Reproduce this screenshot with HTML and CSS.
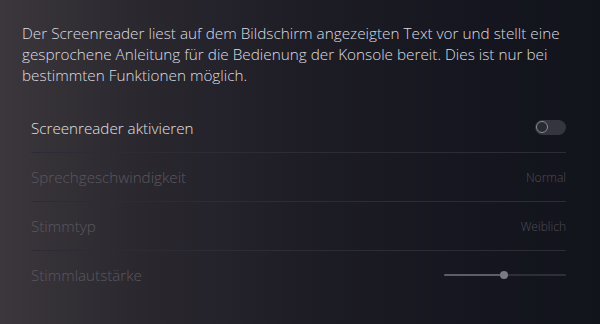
FILE: index.html
```html
<!DOCTYPE html>
<html lang="de">
<head>
<meta charset="utf-8">
<link rel="stylesheet" href="styles.css">
</head>
<body>
<main class="page">
  <p class="intro">Der Screenreader liest auf dem Bildschirm angezeigten Text vor und stellt eine gesprochene Anleitung für die Bedienung der Konsole bereit. Dies ist nur bei bestimmten Funktionen möglich.</p>
  <ul class="settings">
    <li class="row">
      <span class="label">Screenreader aktivieren</span>
      <span class="toggle"><span class="knob"></span></span>
    </li>
    <li class="row disabled">
      <span class="label">Sprechgeschwindigkeit</span>
      <span class="value">Normal</span>
    </li>
    <li class="row disabled">
      <span class="label">Stimmtyp</span>
      <span class="value">Weiblich</span>
    </li>
    <li class="row disabled last">
      <span class="label">Stimmlautstärke</span>
      <span class="slider"><span class="fill"></span><span class="thumb"></span></span>
    </li>
  </ul>
</main>
</body>
</html>
```

FILE: styles.css
```css
html, body {
  margin: 0;
  height: 100%;
}
body {
  background: linear-gradient(90deg, #3b373c 0%, #2b282f 22%, #1e1d26 50%, #15161f 78%, #12141c 100%);
  font-family: "Open Sans", "Noto Sans", sans-serif;
  font-weight: 300;
  overflow: hidden;
}
.page {
  padding: 23px 30px 0 22px;
}
.intro {
  margin: 0;
  font-size: 15.3px;
  line-height: 21px;
  color: #dcdce2;
}
.settings {
  list-style: none;
  margin: 17px 4px 0 9px;
  padding: 0;
}
.row {
  display: flex;
  align-items: center;
  justify-content: space-between;
  height: 48px;
  border-bottom: 1px solid #2d2c36;
}
.row:first-child {
  height: 49px;
}
.row.last {
  border-bottom: none;
}
.label {
  font-size: 15.2px;
  color: #e0e0e4;
}
.disabled .label {
  color: #5a5861;
}
.value {
  font-size: 12px;
  color: #4e4d57;
}
.toggle {
  position: relative;
  width: 31px;
  height: 15px;
  border-radius: 8px;
  background: #35353f;
}
.knob {
  position: absolute;
  left: 1px;
  top: 1px;
  width: 10px;
  height: 10px;
  border-radius: 50%;
  border: 1.5px solid #8c8c96;
  background: #2a2a33;
}
.slider {
  position: relative;
  width: 122px;
  height: 2px;
  background: #2f2f39;
  border-radius: 1px;
}
.fill {
  position: absolute;
  left: 0;
  top: 0;
  width: 60px;
  height: 2px;
  background: #5e5d67;
  border-radius: 1px;
}
.thumb {
  position: absolute;
  left: 56px;
  top: -3px;
  width: 8px;
  height: 8px;
  border-radius: 50%;
  background: #7a7a84;
}
```
